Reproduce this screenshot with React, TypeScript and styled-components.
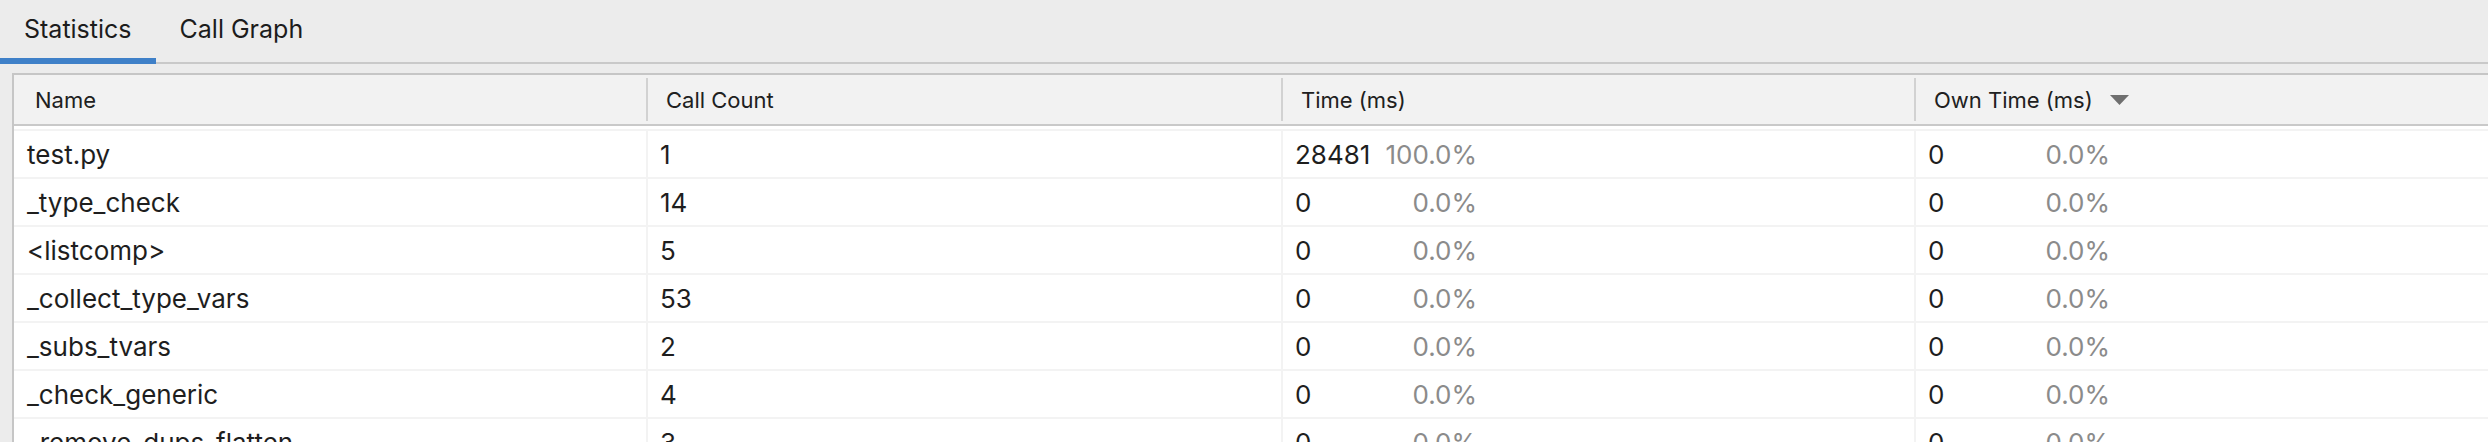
import styled, { createGlobalStyle } from 'styled-components';

const GlobalStyle = createGlobalStyle`
  html, body {
    margin: 0;
    padding: 0;
    background: #ececec;
    overflow: hidden;
  }
  body {
    font-family: Inter, 'Liberation Sans', Arial, sans-serif;
    color: #1e1e1e;
    -webkit-font-smoothing: antialiased;
  }
`;

const Page = styled.div`
  width: 2488px;
  height: 442px;
  overflow: hidden;
  background: #ececec;
`;

const TabBar = styled.div`
  display: flex;
  height: 62px;
  border-bottom: 2px solid #c9c9c9;
`;

const Tab = styled.div<{ $active?: boolean }>`
  box-sizing: border-box;
  height: 64px;
  margin-bottom: -2px;
  padding: 0 24px;
  display: flex;
  align-items: center;
  font-size: 25px;
  color: #1c1c1c;
  border-bottom: 6px solid ${p => (p.$active ? '#3f80c8' : 'transparent')};
`;

const Content = styled.div`
  padding: 9px 0 0 12px;
`;

const Table = styled.div`
  border-top: 2px solid #c6c6c6;
  border-left: 2px solid #c6c6c6;
  background: #fff;
  width: 2600px;
`;

const HeaderRow = styled.div`
  display: grid;
  grid-template-columns: 632px 635px 633px 634px;
  height: 49px;
  background: #f2f2f2;
  border-bottom: 2px solid #c9c9c9;
`;

const HeaderCell = styled.div<{ $first?: boolean }>`
  position: relative;
  display: flex;
  align-items: center;
  gap: 17px;
  padding-left: ${p => (p.$first ? '21px' : '20px')};
  font-size: 22px;
  color: #202020;

  &::before {
    content: '';
    display: ${p => (p.$first ? 'none' : 'block')};
    position: absolute;
    left: 0;
    top: 3px;
    bottom: 3px;
    width: 2px;
    background: #d2d2d2;
  }
`;

const Body = styled.div`
  padding-top: 3px;
`;

const Row = styled.div`
  display: grid;
  grid-template-columns: 632px 635px 633px 634px;
  height: 48px;
  box-sizing: border-box;
  border-top: 2px solid #f3f3f3;
`;

const Cell = styled.div<{ $first?: boolean }>`
  display: flex;
  align-items: center;
  padding-left: ${p => (p.$first ? '13px' : '12px')};
  border-left: ${p => (p.$first ? 'none' : '2px solid #f3f3f3')};
  font-size: 26px;
  white-space: nowrap;
`;

const TimeBox = styled.div`
  display: flex;
  justify-content: space-between;
  gap: 10px;
  width: 182px;
`;

const Pct = styled.span`
  color: #8b8b8b;
`;

const SortArrow = () => (
  <svg width="19" height="10" viewBox="0 0 19 10">
    <path d="M0 0 H19 L9.5 10 Z" fill="#6f6f6f" />
  </svg>
);

type Entry = { name: string; count: number; time: number; timePct: string; own: number; ownPct: string };

const rows: Entry[] = [
  { name: 'test.py', count: 1, time: 28481, timePct: '100.0%', own: 0, ownPct: '0.0%' },
  { name: '_type_check', count: 14, time: 0, timePct: '0.0%', own: 0, ownPct: '0.0%' },
  { name: '<listcomp>', count: 5, time: 0, timePct: '0.0%', own: 0, ownPct: '0.0%' },
  { name: '_collect_type_vars', count: 53, time: 0, timePct: '0.0%', own: 0, ownPct: '0.0%' },
  { name: '_subs_tvars', count: 2, time: 0, timePct: '0.0%', own: 0, ownPct: '0.0%' },
  { name: '_check_generic', count: 4, time: 0, timePct: '0.0%', own: 0, ownPct: '0.0%' },
  { name: '_remove_dups_flatten', count: 3, time: 0, timePct: '0.0%', own: 0, ownPct: '0.0%' },
];

function App() {
  return (
    <Page>
      <GlobalStyle />
      <TabBar>
        <Tab $active>Statistics</Tab>
        <Tab>Call Graph</Tab>
      </TabBar>
      <Content>
        <Table>
          <HeaderRow>
            <HeaderCell $first>Name</HeaderCell>
            <HeaderCell>Call Count</HeaderCell>
            <HeaderCell>Time (ms)</HeaderCell>
            <HeaderCell>
              Own Time (ms)
              <SortArrow />
            </HeaderCell>
          </HeaderRow>
          <Body>
            {rows.map(r => (
              <Row key={r.name}>
                <Cell $first>{r.name}</Cell>
                <Cell>{r.count}</Cell>
                <Cell>
                  <TimeBox>
                    <span>{r.time}</span>
                    <Pct>{r.timePct}</Pct>
                  </TimeBox>
                </Cell>
                <Cell>
                  <TimeBox>
                    <span>{r.own}</span>
                    <Pct>{r.ownPct}</Pct>
                  </TimeBox>
                </Cell>
              </Row>
            ))}
          </Body>
        </Table>
      </Content>
    </Page>
  );
}

export default App;
